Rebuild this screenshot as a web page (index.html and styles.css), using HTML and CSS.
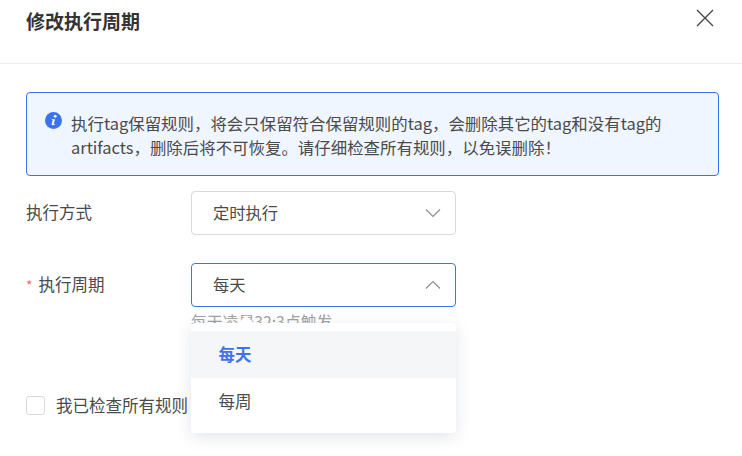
FILE: index.html
```html
<!DOCTYPE html>
<html lang="zh-CN">
<head>
<meta charset="utf-8">
<title>修改执行周期</title>
<link rel="stylesheet" href="styles.css">
</head>
<body>
<div class="dialog">
  <header class="head">
    <h1 class="title">修改执行周期</h1>
    <button class="close" aria-label="关闭">
      <svg width="18" height="18" viewBox="0 0 18 18"><path d="M1 1l16 16M17 1L1 17" fill="none" stroke="#444" stroke-width="1.3"/></svg>
    </button>
  </header>
  <main class="body">
    <div class="alert">
      <svg class="alert-icon" width="17" height="17" viewBox="0 0 17 17"><circle cx="8.5" cy="8.5" r="8.5" fill="#3d73ea"/><circle cx="10.2" cy="4.3" r="1.4" fill="#fff"/><path d="M6.8 7.2h3.2L8.7 12c-.1.5.4.5 1.6-.3l-.2.9c-1 .9-3.6 1.3-3.4-.5l1-4H6.7z" fill="#fff"/></svg>
      <p class="alert-text">执行tag保留规则，将会只保留符合保留规则的tag，会删除其它的tag和没有tag的artifacts，删除后将不可恢复。请仔细检查所有规则，以免误删除！</p>
    </div>
    <div class="row">
      <label class="label">执行方式</label>
      <div class="select">
        <span class="value">定时执行</span>
        <svg width="16" height="10" viewBox="0 0 16 10"><path d="M1 1.5l7 7 7-7" fill="none" stroke="#8a8f99" stroke-width="1.2"/></svg>
      </div>
    </div>
    <div class="row row-period">
      <label class="label"><span class="req">*</span>执行周期</label>
      <div class="field">
        <div class="select open">
          <span class="value">每天</span>
          <svg width="16" height="10" viewBox="0 0 16 10"><path d="M1 8.5l7-7 7 7" fill="none" stroke="#8a8f99" stroke-width="1.2"/></svg>
        </div>
        <p class="hint">每天凌晨32:3点触发</p>
        <div class="menu">
          <span class="arrow"></span>
          <div class="opt active">每天</div>
          <div class="opt">每周</div>
        </div>
      </div>
    </div>
    <label class="check"><span class="box"></span>我已检查所有规则</label>
  </main>
</div>
</body>
</html>
```
FILE: styles.css
```css
* { box-sizing: border-box; }
html, body { margin: 0; height: 100%; }
body { background: #fff; color: #444; font-family: "Noto Sans CJK SC", "Noto Sans", sans-serif; overflow: hidden; }
.dialog { width: 742px; height: 456px; }
.head { height: 64px; border-bottom: 1px solid #ececec; padding: 9px 28px 0 26px; display: flex; justify-content: space-between; align-items: flex-start; }
.title { margin: 0; font-size: 19px; line-height: 24px; font-weight: 700; color: #333; }
.close { border: 0; background: none; padding: 0; height: 18px; width: 18px; display: block; }
.close svg { display: block; }
.body { padding: 28px 23px 0 26px; }
.alert { height: 84px; border: 1px solid #3d73ea; border-radius: 4px; background: #f0f6ff; padding: 18px 16px 0 18px; display: flex; gap: 9px; }
.alert-icon { flex: none; margin-top: 1px; }
.alert-text { margin: 0; width: 600px; font-size: 16.45px; line-height: 24px; color: #4a4a4a; }
.row { display: flex; margin-top: 15px; }
.row-period { margin-top: 28px; }
.label { width: 165px; font-size: 16.5px; line-height: 42px; color: #4a4a4a; }
.req { color: #f56c6c; margin-right: 6px; font-size: 14px; }
.field { position: relative; width: 265px; }
.select { width: 265px; height: 44px; border: 1px solid #d9d9d9; border-radius: 4px; background: #fff; padding: 0 14px 0 21px; display: flex; align-items: center; justify-content: space-between; font-size: 16.3px; color: #4a4a4a; }
.value { padding-bottom: 2px; }
.select.open { border-color: #3d73ea; }
.hint { margin: 5px 0 0; font-size: 15.8px; line-height: 20px; color: #a3a3a3; white-space: nowrap; height: 20px; }
.menu { position: absolute; left: 0; top: 60px; width: 265px; height: 110px; background: #fff; border-radius: 4px; box-shadow: 0 4px 16px rgba(60, 70, 100, .14); padding-top: 8px; }
.arrow { position: absolute; left: 49px; top: -5px; width: 12px; height: 12px; background: #fff; transform: rotate(45deg); }
.opt { position: relative; height: 47px; padding-left: 27.5px; font-size: 16.5px; line-height: 47px; color: #4a4a4a; }
.opt.active { background: #f5f6f8; color: #3d73ea; font-weight: 700; }
.check { display: flex; align-items: center; gap: 11px; margin-top: 61px; font-size: 16.5px; line-height: 24px; color: #4a4a4a; }
.box { width: 19px; height: 19px; border: 1px solid #d9d9d9; border-radius: 3px; background: #fff; }
```
